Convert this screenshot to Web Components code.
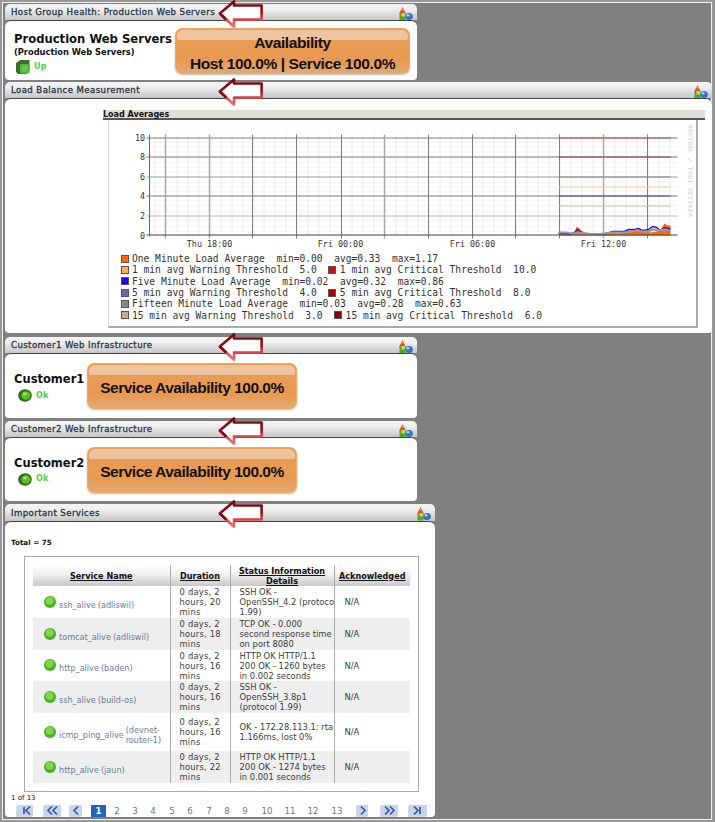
<!DOCTYPE html>
<html><head><meta charset="utf-8"><title>Dashboard</title>
<style>
html,body{margin:0;padding:0;background:#8e8e8e}
body{width:715px;height:822px;overflow:hidden;font-family:"DejaVu Sans",Verdana,sans-serif}
</style></head><body>
<template id="tp-page"><style>
:host{display:flex;flex-direction:column;box-sizing:border-box;width:714px;height:822px;padding:4px 0 0 5px;background:#808080;box-shadow:inset 0 0 0 2px #989898,inset 0 0 0 3px #f0f0f0}
</style><slot></slot></template>

<template id="tp-panel"><style>
:host{display:block;position:relative;box-sizing:border-box;width:var(--w,412px);margin-bottom:var(--mb,2px)}
.head{box-sizing:border-box;height:var(--hh,16px);border-radius:5px 5px 0 0;background:linear-gradient(#f4f4f4,#f0f0f0 30%,#c6c6c6);padding:0 0 0 6px;display:flex;align-items:center;justify-content:space-between;font:400 8.6px/16px "DejaVu Sans",sans-serif;letter-spacing:.4px;-webkit-text-stroke:.3px #2b3644;color:#2b3644;position:relative}
.body{box-sizing:border-box;height:var(--h,60px);background:#fff;border-radius:6px 6px 4px 4px;border-top:1px solid #444;overflow:hidden;position:relative}
svg.ic{margin-right:4px;margin-top:3px;flex:none}
svg.arrow{position:absolute;left:213px;top:-4px}
</style>
<div class="head"><span class="t"></span>
<svg class="ic" width="15" height="14" viewBox="0 0 15 14"><path d="M4.5 0 L8 7 H1Z" fill="#e0512b"/><path d="M3.5 3 L4.5 1 L6 4Z" fill="#f2a072"/><rect x="1.5" y="6.5" width="6" height="7" fill="#46a82e"/><rect x="3.5" y="6" width="3.5" height="3.5" fill="#e6cf3a"/><ellipse cx="11" cy="9.5" rx="3.9" ry="3.6" fill="#3476bd"/><ellipse cx="10" cy="8.3" rx="1.5" ry="1.2" fill="#a9d0f2"/></svg>
</div>
<div class="body"><slot></slot></div>
<svg class="arrow" width="46" height="29" viewBox="0 0 46 29">
<defs><linearGradient id="g" gradientUnits="userSpaceOnUse" x1="0" y1="0" x2="0" y2="28"><stop offset="0" stop-color="#6d0a0e"/><stop offset=".45" stop-color="#93101a"/><stop offset=".62" stop-color="#d8363c"/><stop offset="1" stop-color="#f07a7e"/></linearGradient></defs>
<path d="M1.8 13.5 L16 1.5 V5.5 H43.6 V19.5 H16 V26.8 Z" fill="#fff" stroke="url(#g)" stroke-width="2.6" stroke-linejoin="round"/>
<path d="M1.8 13.5 L16 26.8" fill="none" stroke="#7d0d14" stroke-width="2.6" stroke-dasharray="9 30"/>
</svg>
</template>

<template id="tp-avail"><style>
:host{display:flex;flex-direction:column;align-items:center;justify-content:center;box-sizing:border-box;position:relative;background:linear-gradient(#e99c52,#e89a52 70%,#e3a873);border-radius:7px;border:1px solid #eda862;box-shadow:0 1px 2px #bbb;font:bold 15.5px/21px "Liberation Sans",Arial,sans-serif;letter-spacing:-.4px;color:#111;overflow:hidden;text-align:center;white-space:nowrap}
:host::before{content:"";position:absolute;left:1px;right:1px;top:1px;height:10px;background:#eec49e;border-radius:6px 6px 2px 2px}
.in{position:relative;padding-top:3px}
</style><div class="in"><slot></slot></div></template>

<template id="tp-status"><style>
:host{display:flex;align-items:center;font:bold 8px/12px "DejaVu Sans",sans-serif;color:#4fcf3c;letter-spacing:.3px}
.sl{margin-right:4px;display:flex}
</style><span class="sl"><slot name="icon"></slot></span><slot></slot></template>

<template id="tp-chart"><style>
:host{display:block;box-sizing:border-box;position:absolute;left:98px;top:11px;width:602px}
.bar{box-sizing:border-box;height:10px;background:#e1ded7;border-bottom:2px solid #555;font:bold 8px/9px "DejaVu Sans",sans-serif;color:#111;white-space:nowrap}
.frame{box-sizing:border-box;margin-left:5px;width:590px;height:208px;border-right:2px solid #aaa;border-bottom:2px solid #aaa;border-left:1px solid #ddd;position:relative;background:#fff}
svg{position:absolute;left:0;top:0}
.leg{position:absolute;left:12px;top:133px;font:9.6px/11.33px "DejaVu Sans Mono",monospace;color:#333;white-space:pre}
.row{display:flex;align-items:center;height:11.33px}
i{display:inline-block;box-sizing:border-box;width:8px;height:8px;border:1px solid #555;margin-right:3px;flex:none}
i.m{margin-left:11px;margin-right:4px}
</style><div class="bar">Load Averages</div>
<div class="frame"><svg id="s" width="588" height="135" font-family="DejaVu Sans Mono" font-size="8.4" fill="#333"></svg>
<div class="leg" id="l"></div></div></template>

<template id="tp-table"><style>
:host{display:block;box-sizing:border-box;width:395px;height:236px;margin-left:19px;border:1px solid #aaa;padding:8px 8px 0 8px;background:#fff}
table{border-collapse:collapse;table-layout:fixed;width:377px;font:8.4px/10px "DejaVu Sans",sans-serif;color:#3c3c3c}
th{height:21px;padding:0;background:linear-gradient(#fff,#f2f2f2 40%,#c9c9c9);font:bold 8.1px/10px "DejaVu Sans",sans-serif;color:#111;text-decoration:underline;text-align:center;border-left:1px solid #aaa}
th:first-child,td:first-child{border-left:0}
td{padding:0 0 0 9px;border-left:1px solid #aaa;vertical-align:middle;overflow:hidden}
td:nth-child(2){letter-spacing:.2px}
td:nth-child(3){white-space:nowrap}
td:first-child{padding:0 0 0 11px}
td:last-child{padding-left:10px}
tr:nth-child(even) td{background:#eee}
.n{display:flex;align-items:center;color:#6c7d98;font-size:8.1px}
.n svg{flex:none;margin:-1px 3px 0 0}
.n span{padding-top:5px}
.n span.h{margin-left:2px}
</style><table><colgroup><col style="width:137px"><col style="width:60px"><col style="width:104px"><col style="width:76px"></colgroup><thead id="h"></thead><tbody id="b"></tbody></table></template>

<template id="tp-pager"><style>
:host{display:block;position:relative;height:14px;font:8.6px/12px "DejaVu Sans",sans-serif;color:#66768a}
span{position:absolute;top:0;text-align:center;transform:translateX(-50%)}
b{position:absolute;top:0;left:86px;width:15px;height:12px;background:#2266bb;color:#fff;font:bold 8.5px/12px "DejaVu Sans",sans-serif;text-align:center}
svg{position:absolute;top:0;box-shadow:-1px 1px 0 #d5d9e2}
</style><div id="p"></div></template>

<dash-page>
<dash-panel title="Host Group Health: Production Web Servers" style="--w:412px;--h:60px;--mb:2px">
 <div style="display:flex;padding:7px 0 0 0;height:56px;box-sizing:border-box">
  <div style="width:170px;padding:4px 0 0 9px;box-sizing:border-box">
   <div style="font:bold 11.6px/14px 'DejaVu Sans',sans-serif;color:#111;white-space:nowrap">Production Web Servers</div>
   <div style="font:bold 8.3px/11px 'DejaVu Sans',sans-serif;color:#111;white-space:nowrap;margin-top:1px">(Production Web Servers)</div>
   <dash-status style="margin:2px 0 0 2px"><svg slot="icon" width="14" height="14" viewBox="0 0 14 14"><path d="M0 3 L4 0 H13.5 V10 L10 14 H2 L0 12Z" fill="#3d6f2c"/><rect x="4" y="4" width="9.5" height="9.5" fill="#52b53a"/><rect x="5.5" y="5.5" width="6" height="6" fill="#66c84c"/></svg>Up</dash-status>
  </div>
  <dash-avail style="width:235px;height:46px">Availability<br>Host 100.0% | Service 100.0%</dash-avail>
 </div>
</dash-panel>
<dash-panel title="Load Balance Measurement" style="--w:707px;--h:235px;--mb:4px"><dash-chart></dash-chart></dash-panel>
<dash-panel title="Customer1 Web Infrastructure" style="--w:412px;--h:65px;--mb:3px"><dash-customer name="Customer1"></dash-customer></dash-panel>
<dash-panel title="Customer2 Web Infrastructure" style="--w:412px;--h:64px;--mb:3px"><dash-customer name="Customer2"></dash-customer></dash-panel>
<dash-panel title="Important Services" style="--w:430px;--hh:17px;--h:296px;--mb:0">
 <div style="font:bold 7.2px/10px 'DejaVu Sans',sans-serif;color:#111;padding:16px 0 0 6px;height:34px;box-sizing:border-box">Total = 75</div>
 <dash-table></dash-table>
 <div style="font:7px/10px 'DejaVu Sans',sans-serif;color:#111;padding:1px 0 0 6px;height:13px;box-sizing:border-box">1 of 13</div>
 <dash-pager></dash-pager>
</dash-panel>
</dash-page>
<script>
function mk(id){return class extends HTMLElement{constructor(){super();this.attachShadow({mode:'open'}).appendChild(document.getElementById(id).content.cloneNode(true));}}}
customElements.define('dash-page',mk('tp-page'));
customElements.define('dash-avail',mk('tp-avail'));
customElements.define('dash-status',mk('tp-status'));
class Panel extends mk('tp-panel'){connectedCallback(){this.shadowRoot.querySelector('.t').textContent=this.getAttribute('title');this.removeAttribute('title');}}
customElements.define('dash-panel',Panel);
class Customer extends HTMLElement{connectedCallback(){const r=this.attachShadow({mode:'open'});const n=this.getAttribute('name');
r.innerHTML=`<style>:host{display:flex;align-items:center;height:100%;padding:0 0 0 9px;box-sizing:border-box}
.l{width:73px;font:bold 11.5px/14px "DejaVu Sans",sans-serif;color:#111;padding-top:2px}
dash-avail{width:210px;height:46px;letter-spacing:-.5px}
dash-status{margin:3px 0 0 4px}</style>
<div class="l">${n}<dash-status><svg slot="icon" width="14" height="13" viewBox="0 0 14 13"><ellipse cx="7" cy="6.5" rx="6.8" ry="6.2" fill="#356622"/><ellipse cx="7.8" cy="6.5" rx="4.6" ry="4.2" fill="#5bc21f"/><ellipse cx="7" cy="5" rx="2" ry="1.4" fill="#9ae36a"/></svg>Ok</dash-status></div><dash-avail>Service Availability 100.0%</dash-avail>`;}}
customElements.define('dash-customer',Customer);
class Chart extends mk('tp-chart'){connectedCallback(){
 const s=this.shadowRoot.getElementById('s');let o='';
 const X=x=>x-108.5,Y=y=>y-120.5;const x0=149,x1=677,y0=236,y1=138;
 const L=(a,b,c,d,col,w=1)=>`<line x1="${a}" y1="${b}" x2="${c}" y2="${d}" stroke="${col}" stroke-width="${w}"/>`;
 for(let i=0;i<20;i++){const y=y0-i*4.9;o+=L(X(x0),Math.round(Y(y)),X(x1),Math.round(Y(y)),'#f2f2f2');}
 for(let x=154.5;x<x1;x+=10.95){const xx=Math.round(X(x));o+=L(xx,Y(y1-3),xx,Y(y0),'#ececec');}
 [[10,'#7d7d7d',1],[8,'#7d7d7d',1],[6,'#a0a0a0',1],[4,'#7d7d7d',1],[2,'#cfcfcf',1.6]].forEach(([v,c,w])=>{const y=Math.round(Y(y0-v*9.8));o+=L(X(x0-3),y,X(x1),y,c,w);});
 const mv=[165,209,252,296,341,384,428,472,515,559,603,647];
 mv.forEach(x=>{const li=(x==209||x==384||x==603||x==165);o+=L(X(x),Y(y1-3),X(x),Y(y0+3),li?'#a8a8a8':'#808080',li?1.4:1);});
 [[10,'#c05050'],[8,'#8e4545'],[6,'#9a8878'],[5,'#ffcf9a'],[4,'#5d4a9a'],[3,'#c8c4a8']].forEach(([v,c])=>{const y=Math.round(Y(y0-v*9.8));o+=L(X(558),y,X(670),y,c);});
 const P=[[559,1],[562,3],[568,3],[571,1],[574,2],[576,9],[579,7],[582,3],[586,2],[600,1],[604,2],[610,3],[618,2],[622,3],[628,5],[634,5],[640,4],[645,5],[650,3],[656,4],[660,6],[664,12],[667,10],[670,10]];
 let a=`M${X(559)} ${Y(y0)}`;P.forEach(([x,v])=>a+=` L${X(x)} ${Y(y0-v)}`);a+=` L${X(670)} ${Y(y0)}Z`;
 o+=`<path d="${a}" fill="#ff6a00"/>`;
 const pl=(pts,c,w)=>`<path d="${pts.map(([x,v],i)=>(i?'L':'M')+X(x)+' '+Y(y0-v)).join(' ')}" fill="none" stroke="${c}" stroke-width="${w}"/>`;
 o+=pl([[558,2],[562,2],[570,1],[574,3],[577,6],[580,4],[585,2],[600,1],[606,2],[612,4],[618,4],[624,4],[628,6],[634,6],[638,7],[642,5],[648,6],[652,9],[656,8],[660,5],[664,8],[668,7],[670,6]],'#2a14e8',1.5);
 o+=pl([[558,3],[565,3],[572,2],[580,3],[590,1.5],[600,1.5],[606,2.5],[612,3],[618,3],[624,3],[630,4],[636,5],[642,4],[648,4],[652,6],[658,5],[664,6],[670,5]],'#9a9a9a',2.2);
 o+=L(X(x0-3),Y(y0)-.5,X(x1),Y(y0)-.5,'#444',1);
 o+=L(X(x0),Y(y1-3),X(x0),Y(y0+1),'#666',1);
 [[10,'10'],[8,'8'],[6,'6'],[4,'4'],[2,'2'],[0,'0']].forEach(([v,t])=>{o+=`<text x="${X(144.5)}" y="${Y(y0-v*9.8)+3}" text-anchor="end">${t}</text>`;});
 [[209,'Thu 18:00'],[340,'Fri 00:00'],[472,'Fri 06:00'],[603,'Fri 12:00']].forEach(([x,t])=>{o+=`<text x="${X(x)}" y="${Y(247)}" text-anchor="middle">${t}</text>`;});
 o+=`<text transform="translate(${X(687)},${Y(125)}) rotate(90)" font-size="6.2" fill="#cfcfcf" letter-spacing=".5">RRDTOOL / TOBI OETIKER</text>`;
 s.innerHTML=o;
 const R=[[['#ff6600','One Minute Load Average  min=0.00  avg=0.33  max=1.17']],
 [['#ffaa55','1 min avg Warning Threshold  5.0'],['#cc1111','1 min avg Critical Threshold  10.0']],
 [['#2200ee','Five Minute Load Average  min=0.02  avg=0.32  max=0.86']],
 [['#6666bb','5 min avg Warning Threshold  4.0'],['#aa0000','5 min avg Critical Threshold  8.0']],
 [['#888888','Fifteen Minute Load Average  min=0.03  avg=0.28  max=0.63']],
 [['#ccaa88','15 min avg Warning Threshold  3.0'],['#880000','15 min avg Critical Threshold  6.0']]];
 this.shadowRoot.getElementById('l').innerHTML=R.map(r=>'<div class="row">'+r.map(([c,t],i)=>`<i class="${i?'m':''}" style="background:${c}"></i><span>${t}</span>`).join('')+'</div>').join('');
}}
customElements.define('dash-chart',Chart);
class T extends mk('tp-table'){connectedCallback(){const r=this.shadowRoot;
 r.getElementById('h').innerHTML='<tr><th>Service Name</th><th>Duration</th><th>Status Information Details</th><th>Acknowledged</th></tr>';
 const dot='<svg width="12" height="12" viewBox="0 0 12 12"><circle cx="6" cy="6" r="6" fill="#4bb024"/><circle cx="5.6" cy="4.8" r="3.9" fill="#7fd84c"/></svg>';
 const D=[['ssh_alive','adliswil','0 days, 2 hours, 20 mins','SSH OK -<br>OpenSSH_4.2 (protocol<br>1.99)',32],
 ['tomcat_alive','adliswil','0 days, 2 hours, 18 mins','TCP OK - 0.000<br>second response time<br>on port 8080',32],
 ['http_alive','baden','0 days, 2 hours, 16 mins','HTTP OK HTTP/1.1<br>200 OK - 1260 bytes<br>in 0.002 seconds',31],
 ['ssh_alive','build-os','0 days, 2 hours, 16 mins','SSH OK -<br>OpenSSH_3.8p1<br>(protocol 1.99)',32],
 ['icmp_ping_alive','devnet-router-1','0 days, 2 hours, 16 mins','OK - 172.28.113.1: rta<br>1.166ms, lost 0%',38],
 ['http_alive','jaun','0 days, 2 hours, 22 mins','HTTP OK HTTP/1.1<br>200 OK - 1274 bytes<br>in 0.001 seconds',32]];
 r.getElementById('b').innerHTML=D.map(d=>`<tr style="height:${d[4]}px"><td><div class="n">${dot}<span>${d[0]}</span><span class="h">(${d[1]})</span></div></td><td>${d[2]}</td><td>${d[3]}</td><td>N/A</td></tr>`).join('');
}}
customElements.define('dash-table',T);
class Pg extends mk('tp-pager'){connectedCallback(){const p=this.shadowRoot.getElementById('p');let h='<b>1</b>';
 [117,135,153,172,190,209,227,245,267,290,313,337].forEach((x,i)=>h+=`<span style="left:${x-5}px">${i+2}</span>`);
 const btn=(x,w,d)=>`<svg style="left:${x-5}px" width="${w}" height="11" viewBox="0 0 ${w} 11"><rect width="${w}" height="11" fill="#c5d5ef"/><path d="${d}" fill="none" stroke="#3a5a94" stroke-width="1.7"/></svg>`;
 h+=btn(17,16,'M7 2V9M13 1.5L9 5.5L13 9.5');
 h+=btn(44,17,'M8 1.5L4 5.5L8 9.5M13 1.5L9 5.5L13 9.5');
 h+=btn(70,12,'M8 1.5L4 5.5L8 9.5');
 h+=btn(357,11,'M4 1.5L8 5.5L4 9.5');
 h+=btn(381,17,'M4 1.5L8 5.5L4 9.5M9 1.5L13 5.5L9 9.5');
 h+=btn(409,18,'M5 1.5L9 5.5L5 9.5M11 2V9');
 p.innerHTML=h;}}
customElements.define('dash-pager',Pg);
</script>
</body></html>
